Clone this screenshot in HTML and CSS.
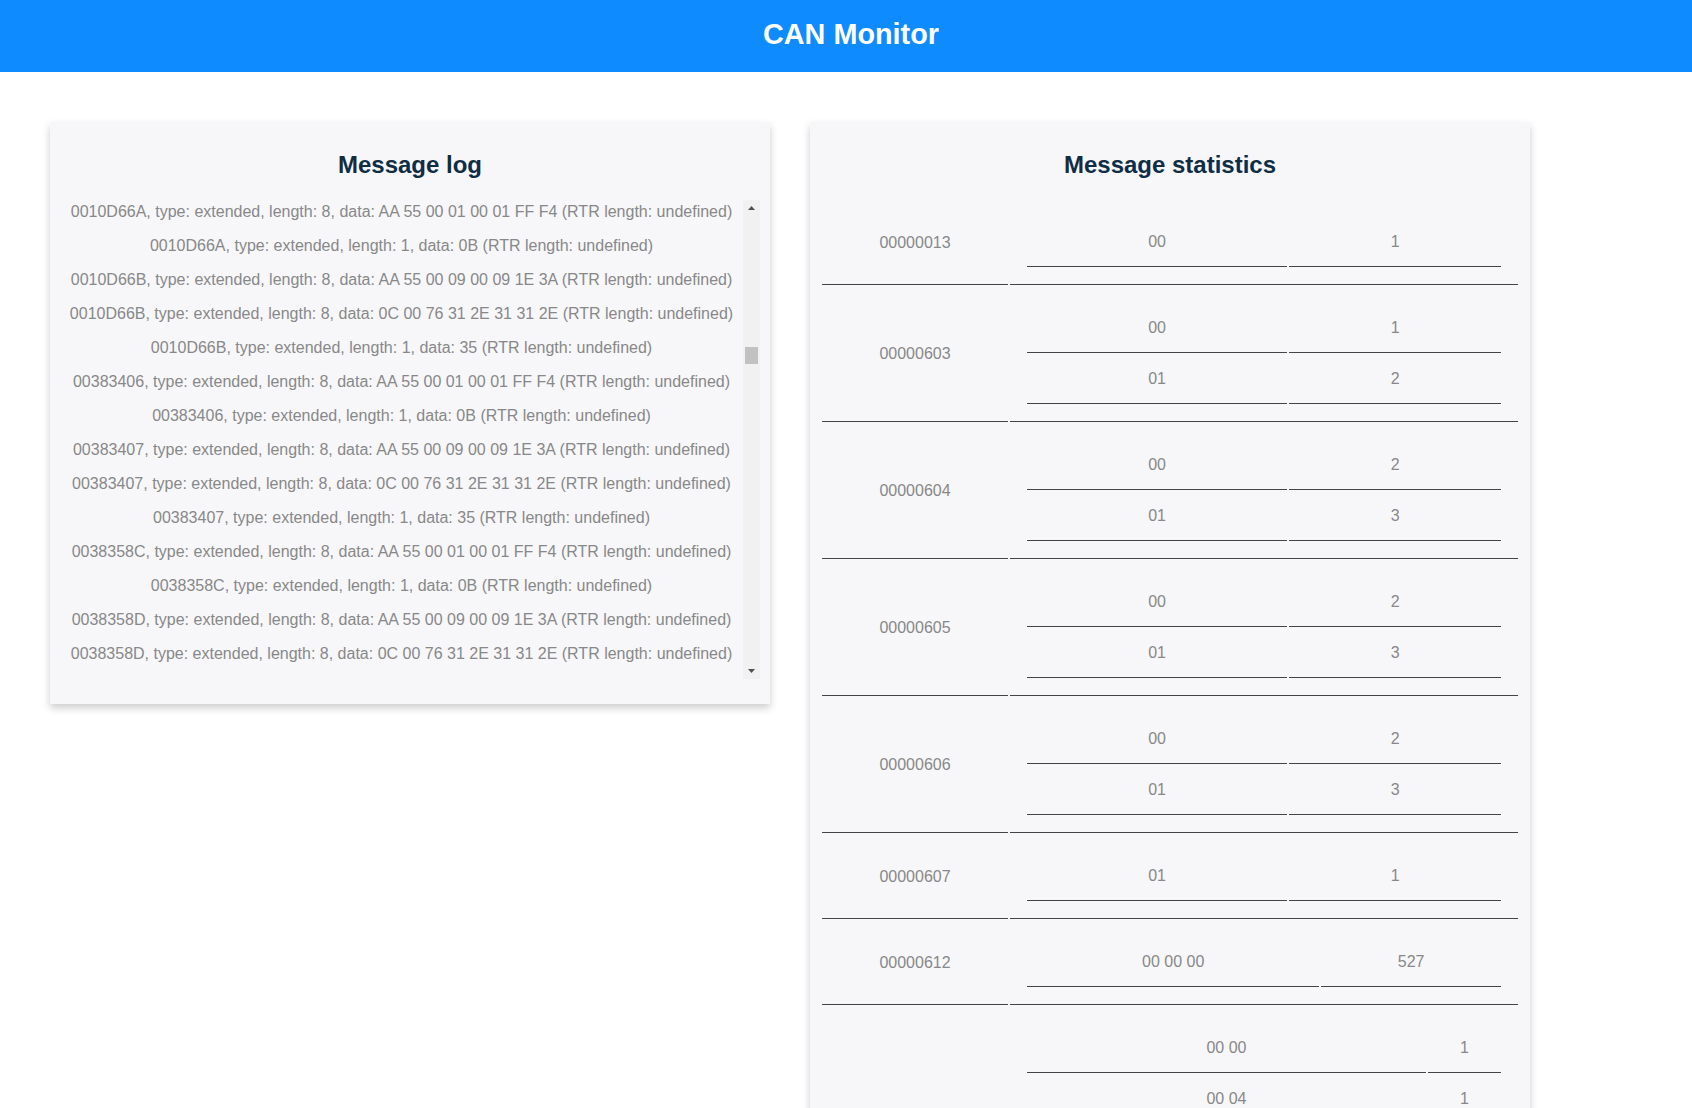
FILE: index.html
```html
<!DOCTYPE html>
<html lang="en">
<head>
<meta charset="utf-8">
<title>CAN Monitor</title>
<link rel="stylesheet" href="styles.css">
</head>
<body>
<header class="topbar">
  <h1 class="topbar-title">CAN Monitor</h1>
</header>
<main class="content">
  <section class="panel">
    <h2 class="panel-title">Message log</h2>
    <div class="log-frame">
      <div class="log">
        <div class="log-line">0010D66A, type: extended, length: 8, data: AA 55 00 01 00 01 FF F4 (RTR length: undefined)</div>
        <div class="log-line">0010D66A, type: extended, length: 1, data: 0B (RTR length: undefined)</div>
        <div class="log-line">0010D66B, type: extended, length: 8, data: AA 55 00 09 00 09 1E 3A (RTR length: undefined)</div>
        <div class="log-line">0010D66B, type: extended, length: 8, data: 0C 00 76 31 2E 31 31 2E (RTR length: undefined)</div>
        <div class="log-line">0010D66B, type: extended, length: 1, data: 35 (RTR length: undefined)</div>
        <div class="log-line">00383406, type: extended, length: 8, data: AA 55 00 01 00 01 FF F4 (RTR length: undefined)</div>
        <div class="log-line">00383406, type: extended, length: 1, data: 0B (RTR length: undefined)</div>
        <div class="log-line">00383407, type: extended, length: 8, data: AA 55 00 09 00 09 1E 3A (RTR length: undefined)</div>
        <div class="log-line">00383407, type: extended, length: 8, data: 0C 00 76 31 2E 31 31 2E (RTR length: undefined)</div>
        <div class="log-line">00383407, type: extended, length: 1, data: 35 (RTR length: undefined)</div>
        <div class="log-line">0038358C, type: extended, length: 8, data: AA 55 00 01 00 01 FF F4 (RTR length: undefined)</div>
        <div class="log-line">0038358C, type: extended, length: 1, data: 0B (RTR length: undefined)</div>
        <div class="log-line">0038358D, type: extended, length: 8, data: AA 55 00 09 00 09 1E 3A (RTR length: undefined)</div>
        <div class="log-line">0038358D, type: extended, length: 8, data: 0C 00 76 31 2E 31 31 2E (RTR length: undefined)</div>
      </div>
      <div class="scrollbar" aria-hidden="true">
        <div class="scrollbar-button">
          <svg width="17" height="17" viewBox="0 0 17 17"><path d="M5 10 L8.5 6 L12 10 Z" fill="#505050"/></svg>
        </div>
        <div class="scrollbar-track">
          <div class="scrollbar-thumb"></div>
        </div>
        <div class="scrollbar-button">
          <svg width="17" height="17" viewBox="0 0 17 17"><path d="M5 7 L12 7 L8.5 11 Z" fill="#505050"/></svg>
        </div>
      </div>
    </div>
  </section>

  <section class="panel">
    <h2 class="panel-title">Message statistics</h2>
    <table class="stats">
      <tr>
        <td class="stats-id">00000013</td>
        <td class="stats-group">
          <table class="stats-inner">
            <tr><td>00</td><td>1</td></tr>
          </table>
        </td>
      </tr>
      <tr>
        <td class="stats-id">00000603</td>
        <td class="stats-group">
          <table class="stats-inner">
            <tr><td>00</td><td>1</td></tr>
            <tr><td>01</td><td>2</td></tr>
          </table>
        </td>
      </tr>
      <tr>
        <td class="stats-id">00000604</td>
        <td class="stats-group">
          <table class="stats-inner">
            <tr><td>00</td><td>2</td></tr>
            <tr><td>01</td><td>3</td></tr>
          </table>
        </td>
      </tr>
      <tr>
        <td class="stats-id">00000605</td>
        <td class="stats-group">
          <table class="stats-inner">
            <tr><td>00</td><td>2</td></tr>
            <tr><td>01</td><td>3</td></tr>
          </table>
        </td>
      </tr>
      <tr>
        <td class="stats-id">00000606</td>
        <td class="stats-group">
          <table class="stats-inner">
            <tr><td>00</td><td>2</td></tr>
            <tr><td>01</td><td>3</td></tr>
          </table>
        </td>
      </tr>
      <tr>
        <td class="stats-id">00000607</td>
        <td class="stats-group">
          <table class="stats-inner">
            <tr><td>01</td><td>1</td></tr>
          </table>
        </td>
      </tr>
      <tr>
        <td class="stats-id">00000612</td>
        <td class="stats-group">
          <table class="stats-inner">
            <tr><td>00 00 00</td><td>527</td></tr>
          </table>
        </td>
      </tr>
      <tr>
        <td class="stats-id">00000613</td>
        <td class="stats-group">
          <table class="stats-inner stats-inner-wide">
            <tr><td>00 00</td><td>1</td></tr>
            <tr><td>00 04</td><td>1</td></tr>
            <tr><td>00 08</td><td>1</td></tr>
            <tr><td>00 0C</td><td>1</td></tr>
            <tr><td>00 10</td><td>1</td></tr>
            <tr><td>00 14</td><td>1</td></tr>
          </table>
        </td>
      </tr>
    </table>
  </section>
</main>
</body>
</html>
```

FILE: styles.css
```css
html, body {
  margin: 0;
  padding: 0;
  background: #ffffff;
  font-family: "Liberation Sans", Arial, sans-serif;
}

.topbar {
  height: 72px;
  background: #0e8bff;
  box-sizing: border-box;
  padding: 0 0 4px 10px;
}

.topbar-title {
  margin: 0;
  font-size: 28.8px;
  font-weight: bold;
  line-height: 68px;
  color: #ffffff;
  text-align: center;
}

.content {
  display: flex;
  align-items: flex-start;
  gap: 40px;
  padding: 50px;
}

.panel {
  width: 720px;
  box-sizing: border-box;
  padding: 10px;
  background: #f7f7f9;
  box-shadow: 0 4px 8px 0 rgba(0, 0, 0, 0.2);
}

.panel-title {
  margin: 19px 0 21px;
  font-size: 24px;
  line-height: 28px;
  font-weight: bold;
  color: #0f2d44;
  text-align: center;
}

.log-frame {
  display: flex;
  height: 479px;
  margin: 0 0 15px;
}

.log {
  flex: 1;
  min-width: 0;
  padding-top: 3px;
  overflow: hidden;
}

.log-line {
  font-size: 16px;
  line-height: 18px;
  margin-bottom: 16px;
  color: #888888;
  text-align: center;
  white-space: nowrap;
}

.scrollbar {
  width: 17px;
  flex: none;
  display: flex;
  flex-direction: column;
  background: #f1f1f1;
}

.scrollbar-button {
  height: 17px;
  flex: none;
}

.scrollbar-button svg {
  display: block;
}

.scrollbar-track {
  flex: 1;
  padding: 0 2px;
}

.scrollbar-thumb {
  height: 17px;
  margin-top: 130px;
  background: #c1c1c1;
}

.stats,
.stats-inner {
  width: 100%;
  border-collapse: separate;
  border-spacing: 2px;
}

.stats {
  margin-top: -1px;
}

.stats td,
.stats-inner td {
  padding: 15px;
  border-bottom: 1px solid #444444;
  font-size: 16px;
  line-height: 18px;
  color: #888888;
  text-align: center;
  vertical-align: middle;
}

.stats td.stats-id {
  width: 156px;
}

.stats-inner-wide td:first-child {
  width: 369px;
}
```
